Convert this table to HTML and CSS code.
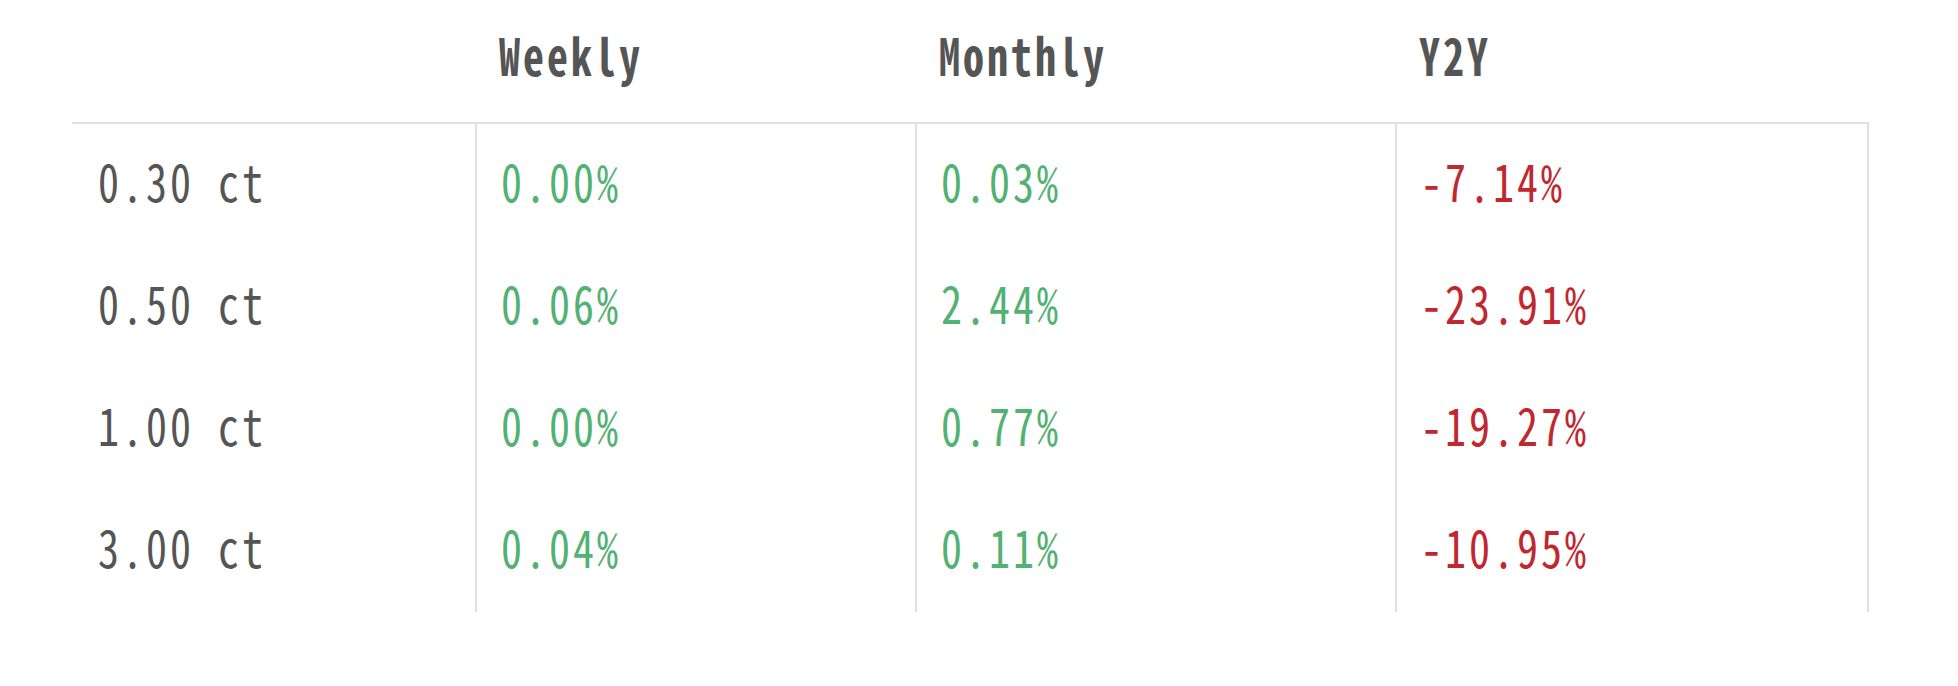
FILE: index.html
```html
<!DOCTYPE html>
<html>
<head>
<meta charset="utf-8">
<link rel="stylesheet" href="styles.css">
</head>
<body>
<div class="wrap">
  <div class="table">
    <div class="hcell first"></div>
    <div class="hcell"><span class="t">Weekly</span></div>
    <div class="hcell"><span class="t">Monthly</span></div>
    <div class="hcell"><span class="t">Y2Y</span></div>

    <div class="cell first"><span class="t">0.30 ct</span></div>
    <div class="cell"><span class="t up">0.00%</span></div>
    <div class="cell"><span class="t up">0.03%</span></div>
    <div class="cell last"><span class="t down">-7.14%</span></div>

    <div class="cell first"><span class="t">0.50 ct</span></div>
    <div class="cell"><span class="t up">0.06%</span></div>
    <div class="cell"><span class="t up">2.44%</span></div>
    <div class="cell last"><span class="t down">-23.91%</span></div>

    <div class="cell first"><span class="t">1.00 ct</span></div>
    <div class="cell"><span class="t up">0.00%</span></div>
    <div class="cell"><span class="t up">0.77%</span></div>
    <div class="cell last"><span class="t down">-19.27%</span></div>

    <div class="cell first"><span class="t">3.00 ct</span></div>
    <div class="cell"><span class="t up">0.04%</span></div>
    <div class="cell"><span class="t up">0.11%</span></div>
    <div class="cell last"><span class="t down">-10.95%</span></div>
  </div>
</div>
</body>
</html>
```

FILE: styles.css
```css
html, body {
  margin: 0;
  padding: 0;
  background: #ffffff;
}
body {
  font-family: "Noto Sans CJK JP", "DejaVu Sans Mono", monospace;
  font-feature-settings: "hwid" 1;
  color: #555555;
}
* {
  box-sizing: border-box;
}
.wrap {
  padding-left: 72px;
}
.table {
  display: grid;
  grid-template-columns: 403px 440px 480px 474px;
  grid-template-rows: 124px repeat(4, 122px);
  width: 1797px;
}
.hcell {
  display: flex;
  align-items: center;
  padding-left: 24px;
  padding-bottom: 14px;
  border-bottom: 2px solid #e0e0e0;
  font-weight: 700;
}
.cell {
  display: flex;
  align-items: center;
  padding-left: 24px;
  padding-bottom: 11px;
  border-left: 2px solid #e0e0e0;
  font-weight: 400;
}
.cell.first {
  border-left: none;
  padding-left: 26px;
}
.cell.last {
  border-right: 2px solid #e0e0e0;
}
.t {
  display: inline-block;
  font-size: 42px;
  letter-spacing: 3px;
  line-height: 1;
  white-space: pre;
  transform: scaleY(1.22);
  transform-origin: center;
}
.up {
  color: #52b173;
}
.down {
  color: #c1272f;
}
```
